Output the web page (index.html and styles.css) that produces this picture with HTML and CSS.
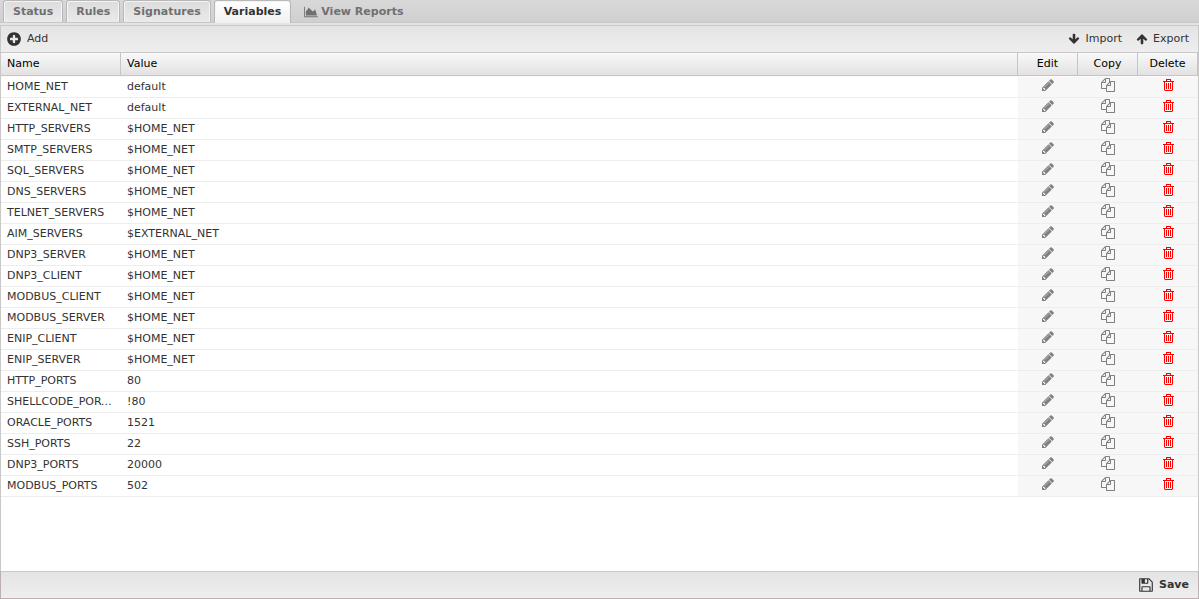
FILE: index.html
```html
<!DOCTYPE html>
<html lang="en">
<head>
  <meta charset="utf-8">
  <title>Intrusion Prevention - Variables</title>
  <link rel="stylesheet" href="styles.css">
</head>
<body>
  <!-- Icon shapes -->
  <svg class="icon-defs" aria-hidden="true">
    <symbol id="plus" viewBox="0 0 1792 1792"><path d="M1344 960v-128q0-26-19-45t-45-19h-256v-256q0-26-19-45t-45-19h-128q-26 0-45 19t-19 45v256h-256q-26 0-45 19t-19 45v128q0 26 19 45t45 19h256v256q0 26 19 45t45 19h128q26 0 45-19t19-45v-256h256q26 0 45-19t19-45zm320-64q0 209-103 385.500t-279.500 279.500-385.500 103-385.500-103-279.500-279.500-103-385.500 103-385.500 279.500-279.500 385.500-103 385.500 103 279.500 279.500 103 385.500z"/></symbol>
    <symbol id="arrow" viewBox="0 0 1792 1792"><path d="M1675 971q0 51-37 90l-75 75q-38 38-91 38-54 0-90-38l-294-293v704q0 52-37.500 84.500t-90.500 32.500h-128q-53 0-90.500-32.500t-37.500-84.500v-704l-294 293q-36 38-90 38t-90-38l-75-75q-38-38-38-90 0-53 38-91l651-651q35-37 90-37 54 0 91 37l651 651q37 39 37 91z"/></symbol>
    <symbol id="chart" viewBox="0 0 2048 1792"><path d="M2048 1536v128h-2048v-1536h128v1408h1920zm-384-1024l256 896h-1664v-576l448-576 576 576z"/></symbol>
    <symbol id="pencil" viewBox="0 0 1792 1792"><path d="M491 1536l91-91-235-235-91 91v107h128v128h107zm523-928q0-22-22-22-10 0-17 7l-542 542q-7 7-7 17 0 22 22 22 10 0 17-7l542-542q7-7 7-17zm-54-192l416 416-832 832h-416v-416zm683 96q0 53-37 90l-166 166-416-416 166-165q36-38 90-38 53 0 91 38l235 234q37 39 37 91z"/></symbol>
    <symbol id="copy" viewBox="0 0 1792 1792"><path d="M1696 384q40 0 68 28t28 68v1216q0 40-28 68t-68 28h-960q-40 0-68-28t-28-68v-288h-544q-40 0-68-28t-28-68v-672q0-40 20-88t48-76l408-408q28-28 76-48t88-20h416q40 0 68 28t28 68v328q68-40 128-40h416zm-544 213l-299 299h299v-299zm-640-384l-299 299h299v-299zm196 647l316-316v-416h-384v416q0 40-28 68t-68 28h-416v640h512v-256q0-40 20-88t48-76zm956 804v-1152h-384v416q0 40-28 68t-68 28h-416v640h896z"/></symbol>
    <symbol id="trash" viewBox="0 0 14 14"><path d="M2 3h11v1h-11zM5 3v-2h5v2h-1v-1h-3v1zM3 4h1v8h7v-8h1v8l-1 1h-7l-1-1zM5 5h1v6h-1zM7 5h1v6h-1zM9 5h1v6h-1z"/></symbol>
    <symbol id="floppy" viewBox="0 0 1792 1792"><path d="M512 1536h768v-384h-768v384zm896 0h128v-896q0-14-10-38.500t-20-34.500l-281-281q-10-10-34-20t-39-10v416q0 40-28 68t-68 28h-576q-40 0-68-28t-28-68v-416h-128v1280h128v-416q0-40 28-68t68-28h832q40 0 68 28t28 68v416zm-384-928v-320q0-13-9.500-22.500t-22.500-9.500h-192q-13 0-22.500 9.500t-9.500 22.500v320q0 13 9.500 22.500t22.500 9.500h192q13 0 22.500-9.500t9.500-22.500zm640 32v928q0 40-28 68t-68 28h-1344q-40 0-68-28t-28-68v-1344q0-40 28-68t68-28h928q40 0 88 20t76 48l280 280q28 28 48 76t20 88z"/></symbol>
  </svg>

  <div class="panel">
    <nav class="tabs">
      <button class="tab">Status</button>
      <button class="tab">Rules</button>
      <button class="tab">Signatures</button>
      <button class="tab active">Variables</button>
      <button class="tab plain"><svg class="chart-icon"><use href="#chart"/></svg>View Reports</button>
    </nav>

    <div class="toolbar">
      <button class="tool"><svg class="icon-large"><use href="#plus"/></svg>Add</button>
      <div class="toolbar-right">
        <button class="tool"><svg class="icon-small down"><use href="#arrow"/></svg>Import</button>
        <button class="tool"><svg class="icon-small"><use href="#arrow"/></svg>Export</button>
      </div>
    </div>

    <div class="grid">
      <table>
        <thead>
          <tr>
            <th class="name">Name</th>
            <th>Value</th>
            <th class="action">Edit</th>
            <th class="action">Copy</th>
            <th class="action">Delete</th>
          </tr>
        </thead>
        <tbody id="variables"></tbody>
      </table>
    </div>

    <div class="footer">
      <button class="tool save"><svg class="icon-large"><use href="#floppy"/></svg>Save</button>
    </div>
  </div>

  <script>
    var variables = [
      ["HOME_NET", "default"],
      ["EXTERNAL_NET", "default"],
      ["HTTP_SERVERS", "$HOME_NET"],
      ["SMTP_SERVERS", "$HOME_NET"],
      ["SQL_SERVERS", "$HOME_NET"],
      ["DNS_SERVERS", "$HOME_NET"],
      ["TELNET_SERVERS", "$HOME_NET"],
      ["AIM_SERVERS", "$EXTERNAL_NET"],
      ["DNP3_SERVER", "$HOME_NET"],
      ["DNP3_CLIENT", "$HOME_NET"],
      ["MODBUS_CLIENT", "$HOME_NET"],
      ["MODBUS_SERVER", "$HOME_NET"],
      ["ENIP_CLIENT", "$HOME_NET"],
      ["ENIP_SERVER", "$HOME_NET"],
      ["HTTP_PORTS", "80"],
      ["SHELLCODE_PORTS", "!80"],
      ["ORACLE_PORTS", "1521"],
      ["SSH_PORTS", "22"],
      ["DNP3_PORTS", "20000"],
      ["MODBUS_PORTS", "502"]
    ];

    function actionCell(label, icon) {
      return '<td class="action"><button class="' + icon + '" aria-label="' + label + '">' +
        '<svg class="icon"><use href="#' + icon + '"/></svg></button></td>';
    }

    document.getElementById("variables").innerHTML = variables.map(function (v) {
      return "<tr><td>" + v[0] + "</td><td>" + v[1] + "</td>" +
        actionCell("Edit", "pencil") + actionCell("Copy", "copy") + actionCell("Delete", "trash") + "</tr>";
    }).join("");
  </script>
</body>
</html>
```
FILE: styles.css
```css
* {
  box-sizing: border-box;
}

body {
  margin: 0;
  font-family: "DejaVu Sans", Verdana, sans-serif;
  font-size: 11px;
  color: #333;
}

button {
  display: flex;
  align-items: center;
  margin: 0;
  padding: 0;
  border: none;
  background: none;
  font: inherit;
  color: inherit;
  cursor: pointer;
}

svg {
  display: block;
  flex: none;
  fill: currentColor;
}

.icon-defs {
  display: none;
}

.icon {
  width: 14px;
  height: 14px;
}

.icon-small {
  width: 12px;
  height: 12px;
}

.icon-large {
  width: 16px;
  height: 16px;
}

.chart-icon {
  width: 14px;
  height: 12px;
}

.down {
  transform: rotate(180deg);
}

.panel {
  display: flex;
  flex-direction: column;
  min-height: 100vh;
}

/* Tabs */
.tabs {
  display: flex;
  gap: 3px;
  height: 26px;
  padding: 0 3px 3px;
  background: linear-gradient(#d8d8d8, #d0d0d0 22px, #c8c8c8 22px, #c8c8c8 23px, #e4e4e4 23px, #e4e4e4 25px, #c8c8c8 25px);
}

.tab {
  height: 22px;
  padding: 0 9px;
  border: 1px solid #b8b8b8;
  border-bottom: none;
  border-radius: 3px 3px 0 0;
  background: linear-gradient(#dcdcdc, #eaeaea);
  box-shadow: inset 1px 1px #f4f4f4, inset -1px 0 #f4f4f4;
  font-weight: bold;
  color: #707070;
}

.tab.active {
  height: 23px;
  padding-bottom: 1px;
  background: linear-gradient(#fff, #f0f0f0);
  color: #333;
}

.tab.plain {
  gap: 3px;
  border-color: transparent;
  background: none;
  box-shadow: none;
}

/* Toolbars */
.toolbar,
.footer {
  display: flex;
  align-items: center;
  justify-content: space-between;
  height: 27px;
  padding: 0 9px 2px 5px;
  border: 1px solid #c8c8c8;
  border-top: none;
  background: linear-gradient(#e4e4e4, #eee);
}

.toolbar-right {
  display: flex;
  gap: 14px;
}

.tool {
  gap: 5px;
}

.tool svg {
  margin-top: 2px;
}

.footer {
  justify-content: flex-end;
  height: 28px;
  border: 1px solid #bcb0b0;
  border-top-color: #c8c8c8;
}

.save {
  font-weight: bold;
}

/* Variables grid */
.grid {
  flex: 1;
  border: 1px solid #c8c8c8;
  border-width: 0 1px;
  background: #fff;
}

table {
  width: 100%;
  table-layout: fixed;
  border-collapse: separate;
  border-spacing: 0;
}

th {
  height: 23px;
  padding: 0 6px 2px;
  border-right: 1px solid #c5c5c5;
  border-bottom: 1px solid #c5c5c5;
  background: linear-gradient(#f9f9f9, #e3e1e1);
  font-weight: normal;
  text-align: left;
  color: #000;
}

th.name {
  width: 120px;
}

th.action {
  width: 60px;
  text-align: center;
}

td {
  height: 21px;
  padding: 0 8px 0 6px;
  border-bottom: 1px solid #ededed;
  line-height: 20px;
  overflow: hidden;
  text-overflow: ellipsis;
  white-space: nowrap;
}

tbody tr:first-child td {
  border-top: 1px solid #fafafa;
  height: 22px;
}

td.action {
  padding: 0 6px 4px;
  background: #f7f7f7;
}

td button {
  margin: 0 auto;
  color: #808080;
}

td .trash {
  color: #f00;
}
```
